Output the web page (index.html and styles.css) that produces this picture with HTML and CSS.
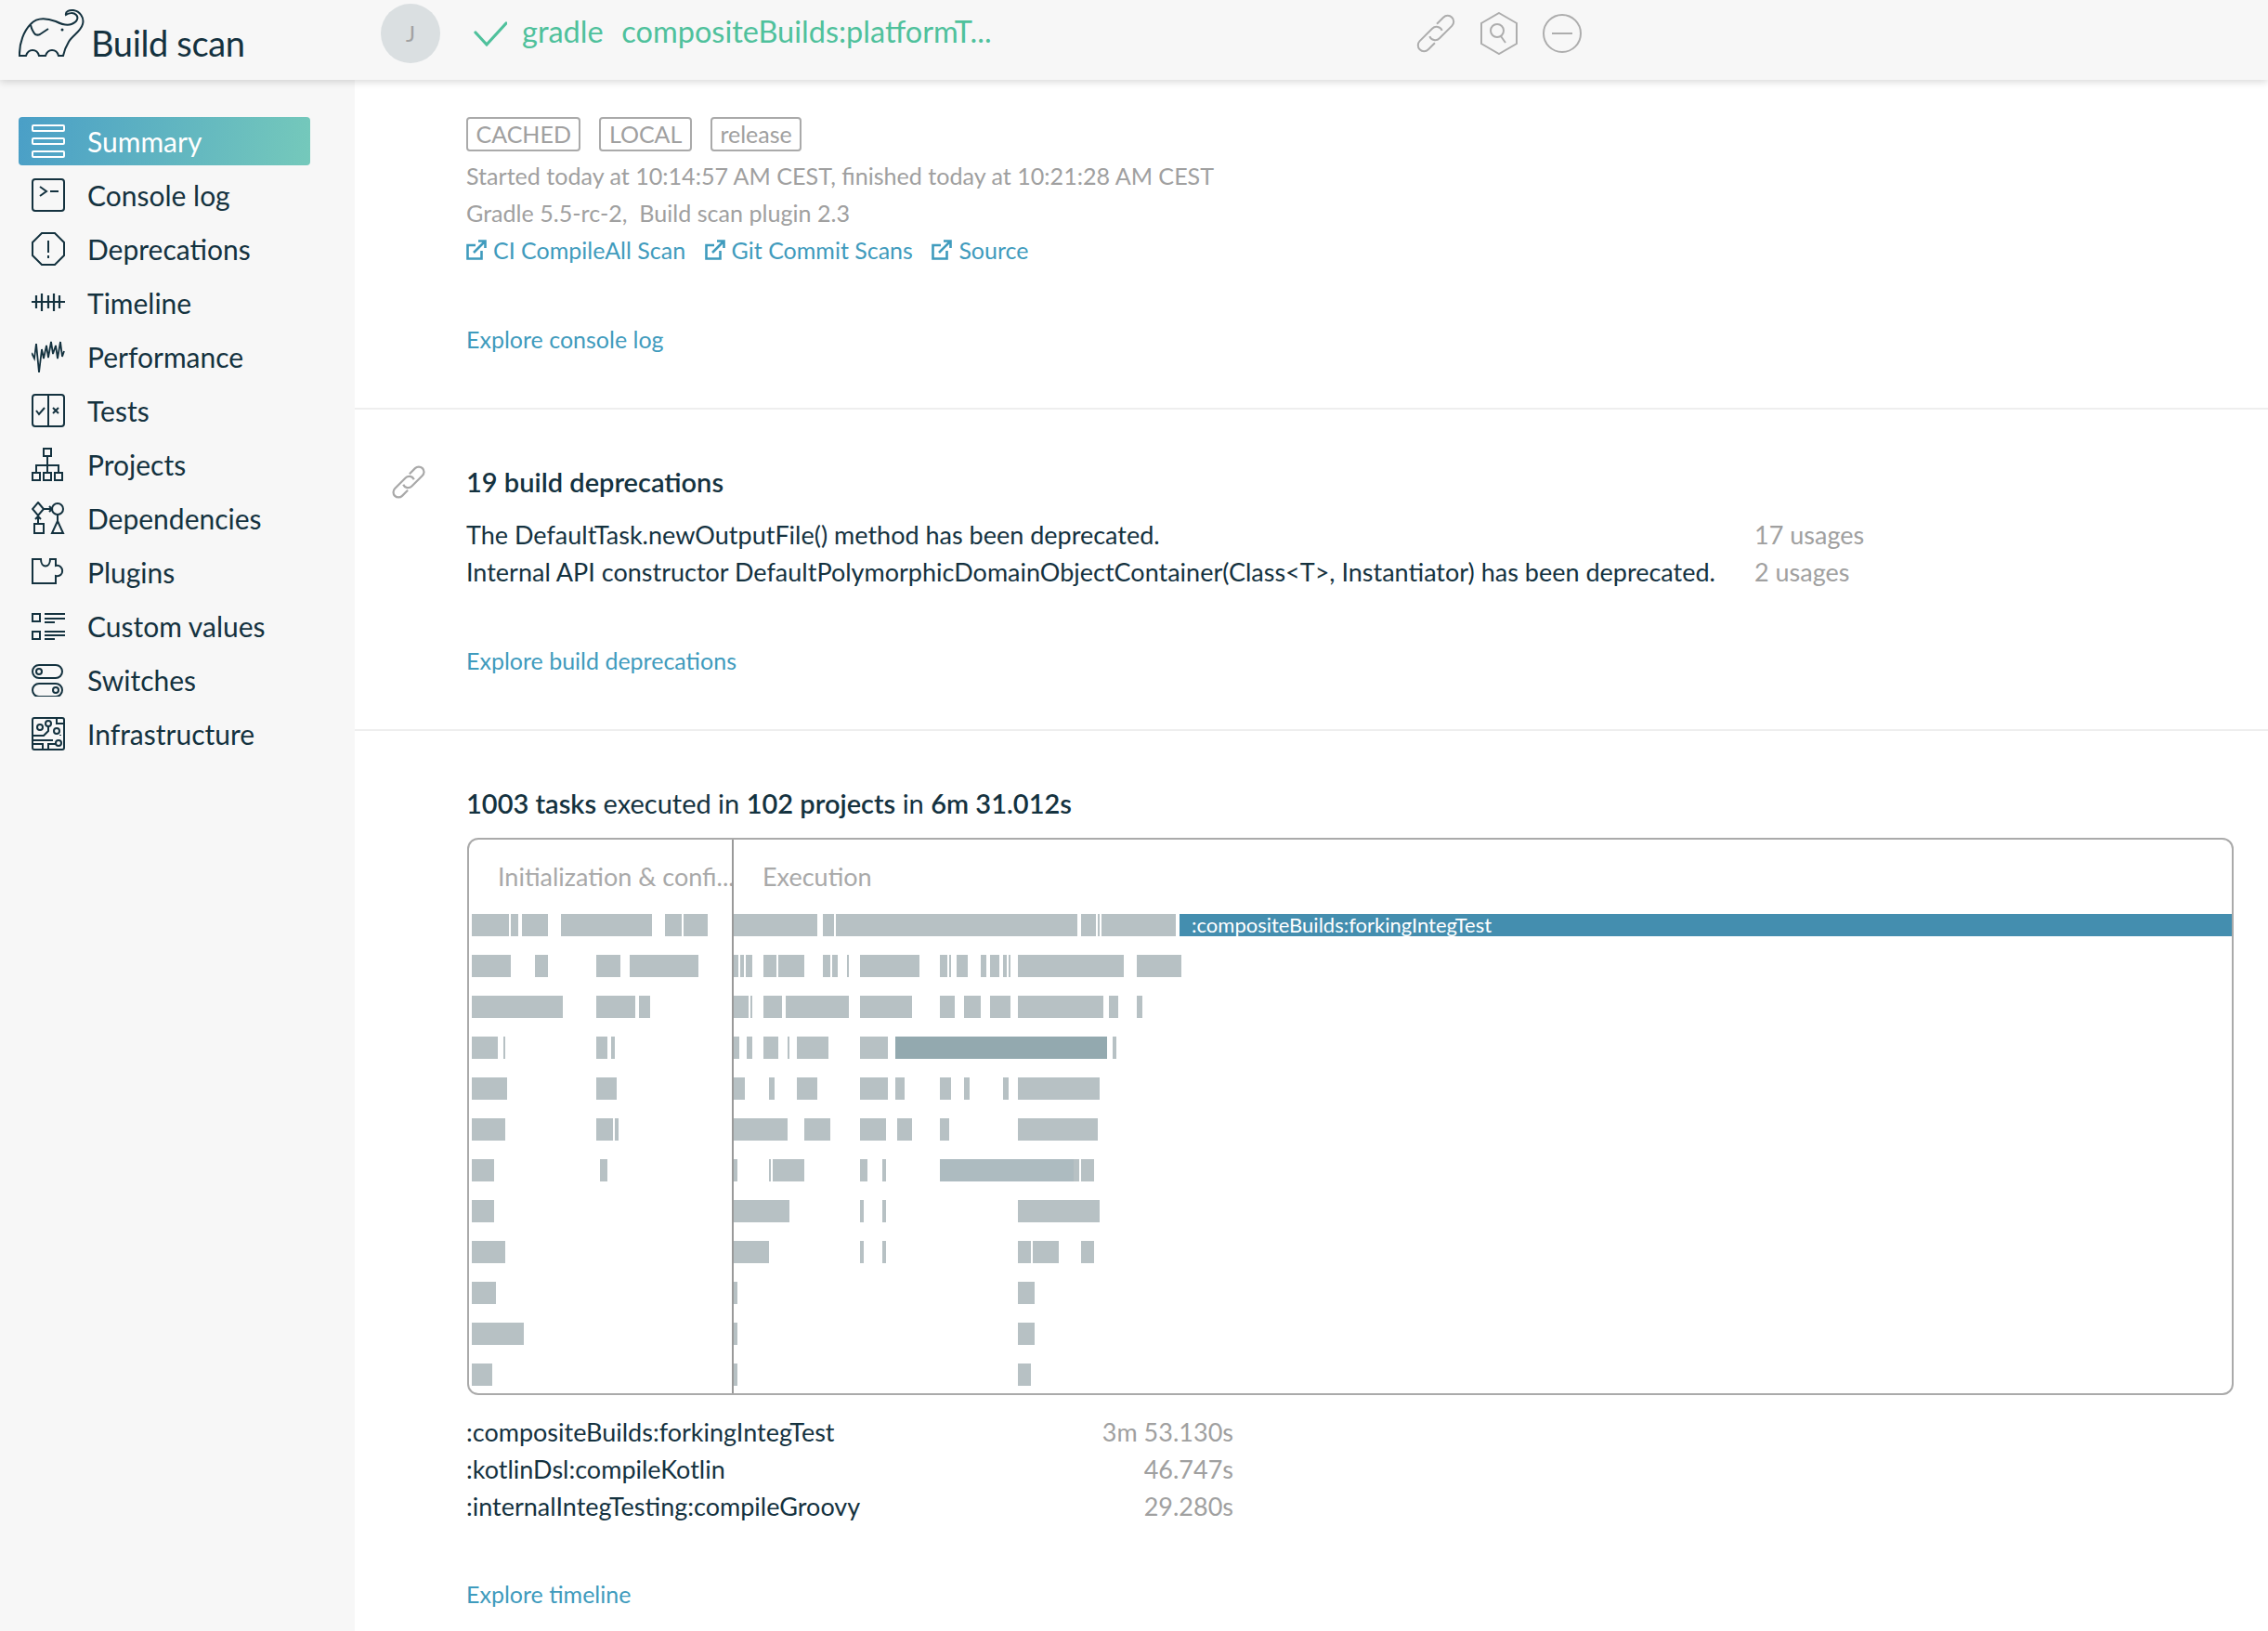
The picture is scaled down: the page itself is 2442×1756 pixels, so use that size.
FILE: index.html
```html
<!DOCTYPE html>
<html lang="en">
<head>
<meta charset="utf-8">
<title>Build scan</title>
<link rel="stylesheet" href="styles.css">
</head>
<body>
<header class="topbar">
  <div class="brand">
    <svg class="logo" viewBox="20 8 72 56"><path d="M21 60C20.500 46 26 33 33 26 40 18 52 20 60 23 66 26 72 28 77 26 83 24 85 19 82 16 79 13 74 14 71 16 70 12 75 10.500 79 11 86 12 91 19 89 26 87 34 78 38 74 45 71 50 69 55 68 60H63C62 56 60 54 56 54 52 54 50 57 49 60H42C41 56 39 54 35 54 31 54 29 57 28 60Z"/><path d="M33 27c1 4 3 8 5 10 2 1 3 1 5 0l9-6"/><circle class="fill" cx="67" cy="32" r="1.500"/></svg>
    <span class="brand-name">Build scan</span>
  </div>
  <div class="avatar">J</div>
  <svg class="check" viewBox="0 0 36 36"><path d="M2 15l12 13L35 5"/></svg>
  <div class="title">gradle&nbsp;&nbsp;compositeBuilds:platformT...</div>
  <div class="actions">
    <svg class="action" viewBox="0 0 42 42"><g transform="rotate(-45 21 21)"><path d="M13 27.500H3a6.500 6.500 0 0 1 0-13H22a6.500 6.500 0 0 1 6 9"/><path d="M29 14.500H39a6.500 6.500 0 0 1 0 13H20a6.500 6.500 0 0 1-6-9"/></g></svg>
    <svg class="action action-hex" viewBox="0 0 40 46"><path d="M20 1l19 11v22L20 45 1 34V12z"/><circle cx="18" cy="20" r="7"/><path d="M22 26l5 7"/></svg>
    <svg class="action" viewBox="0 0 42 42"><circle cx="21" cy="21" r="20"/><path d="M10 21h22"/></svg>
  </div>
</header>
<div class="layout">
  <nav class="sidebar">
    <a class="nav-item active"><svg class="nav-icon" viewBox="0 0 36 36"><rect x="1" y="1" width="34" height="6" rx="1"/><rect x="1" y="15" width="34" height="6" rx="1"/><rect x="1" y="29" width="34" height="6" rx="1"/></svg>Summary</a>
    <a class="nav-item"><svg class="nav-icon" viewBox="0 0 36 36"><rect x="1" y="1" width="34" height="34" rx="3"/><path d="M9 9l7 5-7 5M20 14h9"/></svg>Console log</a>
    <a class="nav-item"><svg class="nav-icon" viewBox="0 0 36 36"><path d="M11 1h14l10 10v14L25 35H11L1 25V11z"/><path d="M18 9v13M18 25v3"/></svg>Deprecations</a>
    <a class="nav-item"><svg class="nav-icon" viewBox="0 0 36 36"><path d="M0 17h36M5 10v14M11 8v19M18 10v14M24 8v19M30 10v14" class="thick"/></svg>Timeline</a>
    <a class="nav-item"><svg class="nav-icon" viewBox="0 0 36 36"><path d="M0 14l3 6 2-16 3 31 3-25 2 10 3-14 2 13 3-17 2 13 3-9 2 14 3-18 2 16 2-6" class="wave"/></svg>Performance</a>
    <a class="nav-item"><svg class="nav-icon" viewBox="0 0 36 36"><rect x="1" y="1" width="34" height="34" rx="3"/><path d="M18 1v34M5 18l3 4 6-7M23 15l6 6M29 15l-6 6"/></svg>Tests</a>
    <a class="nav-item"><svg class="nav-icon" viewBox="0 0 36 36"><rect x="13" y="1" width="8" height="8"/><rect x="1" y="27" width="8" height="8"/><rect x="13" y="27" width="8" height="8"/><rect x="25" y="27" width="8" height="8"/><path d="M17 9v18M5 27v-8h24v8"/></svg>Projects</a>
    <a class="nav-item"><svg class="nav-icon" viewBox="0 0 36 36"><path d="M7 1l6 7-6 7-6-7z"/><circle cx="28" cy="8" r="6"/><rect x="3" y="24" width="10" height="10"/><path d="M28 14v7M28 21l6 13H22zM13 8h9M19 5l3 3-3 3M7 24v-8M4 19l3-3 3 3"/></svg>Dependencies</a>
    <a class="nav-item"><svg class="nav-icon" viewBox="0 0 36 36"><path d="M1 4h9c0 10 10 10 10 0h6v7c9-2 10 13 0 11v8H1z"/></svg>Plugins</a>
    <a class="nav-item"><svg class="nav-icon" viewBox="0 0 36 36"><rect x="1" y="5" width="8" height="8"/><rect x="1" y="24" width="8" height="8"/><path d="M14 5h22M14 10h22M14 14h11M14 24h22M14 28h22M14 32h11"/></svg>Custom values</a>
    <a class="nav-item"><svg class="nav-icon" viewBox="0 0 36 36"><rect x="1" y="2" width="32" height="14" rx="7"/><rect x="1" y="22" width="32" height="14" rx="7"/><circle cx="8" cy="9" r="3"/><circle cx="26" cy="29" r="3"/></svg>Switches</a>
    <a class="nav-item"><svg class="nav-icon" viewBox="0 0 36 36"><rect x="1" y="1" width="34" height="34" rx="2"/><circle cx="9" cy="11" r="3"/><circle cx="18" cy="7" r="3"/><circle cx="27" cy="15" r="3"/><circle cx="29" cy="28" r="3"/><path d="M1 20h12l5-5V10M27 1v6h8M1 25h22v0M1 29h11v6M18 35v-6h8M31 20v-1"/></svg>Infrastructure</a>
  </nav>
  <main class="content">
    <section class="section section-first">
      <div class="gutter"></div>
      <div class="body">
        <div class="tags"><span class="tag">CACHED</span><span class="tag">LOCAL</span><span class="tag">release</span></div>
        <p class="muted">Started today at 10:14:57 AM CEST, finished today at 10:21:28 AM CEST</p>
        <p class="muted">Gradle 5.5-rc-2,&nbsp; Build scan plugin 2.3</p>
        <div class="links">
          <a class="link ext"><svg class="ext-icon" viewBox="0 0 22 22"><path d="M10 6H1.500v14.500h15V12M8 14L20 2M13 1.500h7.500V9"/></svg>CI CompileAll Scan</a>
          <a class="link ext"><svg class="ext-icon" viewBox="0 0 22 22"><path d="M10 6H1.500v14.500h15V12M8 14L20 2M13 1.500h7.500V9"/></svg>Git Commit Scans</a>
          <a class="link ext"><svg class="ext-icon" viewBox="0 0 22 22"><path d="M10 6H1.500v14.500h15V12M8 14L20 2M13 1.500h7.500V9"/></svg>Source</a>
        </div>
        <a class="link explore">Explore console log</a>
      </div>
    </section>
    <section class="section">
      <div class="gutter"><svg class="anchor" viewBox="0 0 42 42"><g transform="rotate(-45 21 21)"><path d="M13 27.500H3a6.500 6.500 0 0 1 0-13H22a6.500 6.500 0 0 1 6 9"/><path d="M29 14.500H39a6.500 6.500 0 0 1 0 13H20a6.500 6.500 0 0 1-6-9"/></g></svg></div>
      <div class="body">
        <h2 class="heading">19 build deprecations</h2>
        <div class="usage-list">
          <span>The DefaultTask.newOutputFile() method has been deprecated.</span><span class="usage">17 usages</span>
          <span>Internal API constructor DefaultPolymorphicDomainObjectContainer(Class&lt;T&gt;, Instantiator) has been deprecated.</span><span class="usage">2 usages</span>
        </div>
        <a class="link explore">Explore build deprecations</a>
      </div>
    </section>
    <section class="section section-last">
      <div class="gutter"></div>
      <div class="body">
        <h2 class="heading regular"><b>1003 tasks</b> executed in <b>102 projects</b> in <b>6m 31.012s</b></h2>
        <div class="chart">
          <div class="chart-head"><div class="phase phase-init">Initialization &amp; confi...</div><div class="phase phase-exec">Execution</div></div>
          <div class="rows">
            <div class="row"><span style="left:3px;width:40px"></span><span style="left:45px;width:8px"></span><span style="left:57px;width:28px"></span><span style="left:99px;width:98px"></span><span style="left:211px;width:18px"></span><span style="left:231px;width:26px"></span><span style="left:285px;width:90px"></span><span style="left:381px;width:12px"></span><span style="left:395px;width:260px"></span><span style="left:659px;width:16px"></span><span style="left:677px;width:2px"></span><span style="left:681px;width:80px"></span><span class="selected">:compositeBuilds:forkingIntegTest</span></div>
            <div class="row"><span style="left:3px;width:42px"></span><span style="left:71px;width:14px"></span><span style="left:137px;width:26px"></span><span style="left:173px;width:74px"></span><span style="left:285px;width:5px"></span><span style="left:292px;width:4px"></span><span style="left:298px;width:7px"></span><span style="left:317px;width:14px"></span><span style="left:333px;width:28px"></span><span style="left:381px;width:8px"></span><span style="left:391px;width:6px"></span><span style="left:407px;width:2px"></span><span style="left:421px;width:64px"></span><span style="left:507px;width:8px"></span><span style="left:517px;width:2px"></span><span style="left:525px;width:12px"></span><span style="left:551px;width:6px"></span><span style="left:561px;width:10px"></span><span style="left:575px;width:4px"></span><span style="left:581px;width:2px"></span><span style="left:591px;width:114px"></span><span style="left:719px;width:48px"></span></div>
            <div class="row"><span style="left:3px;width:98px"></span><span style="left:137px;width:42px"></span><span style="left:183px;width:12px"></span><span style="left:285px;width:16px"></span><span style="left:303px;width:2px"></span><span style="left:317px;width:20px"></span><span style="left:341px;width:68px"></span><span style="left:421px;width:56px"></span><span style="left:507px;width:16px"></span><span style="left:533px;width:18px"></span><span style="left:561px;width:22px"></span><span style="left:591px;width:92px"></span><span style="left:689px;width:10px"></span><span style="left:719px;width:6px"></span></div>
            <div class="row"><span style="left:3px;width:28px"></span><span style="left:37px;width:2px"></span><span style="left:137px;width:12px"></span><span style="left:153px;width:4px"></span><span style="left:285px;width:6px"></span><span style="left:299px;width:6px"></span><span style="left:317px;width:16px"></span><span style="left:343px;width:2px"></span><span style="left:353px;width:34px"></span><span style="left:421px;width:30px"></span><span class="dark" style="left:459px;width:228px"></span><span style="left:693px;width:4px"></span></div>
            <div class="row"><span style="left:3px;width:38px"></span><span style="left:137px;width:22px"></span><span style="left:285px;width:12px"></span><span style="left:323px;width:6px"></span><span style="left:353px;width:22px"></span><span style="left:421px;width:30px"></span><span style="left:459px;width:10px"></span><span style="left:507px;width:12px"></span><span style="left:533px;width:6px"></span><span style="left:575px;width:6px"></span><span style="left:591px;width:88px"></span></div>
            <div class="row"><span style="left:3px;width:36px"></span><span style="left:137px;width:18px"></span><span style="left:157px;width:4px"></span><span style="left:285px;width:58px"></span><span style="left:361px;width:28px"></span><span style="left:421px;width:28px"></span><span style="left:461px;width:16px"></span><span style="left:507px;width:10px"></span><span style="left:591px;width:86px"></span></div>
            <div class="row"><span style="left:3px;width:24px"></span><span style="left:141px;width:8px"></span><span style="left:285px;width:4px"></span><span style="left:323px;width:2px"></span><span style="left:327px;width:34px"></span><span style="left:421px;width:8px"></span><span style="left:445px;width:4px"></span><span class="tint" style="left:507px;width:144px"></span><span style="left:651px;width:6px"></span><span style="left:659px;width:14px"></span></div>
            <div class="row"><span style="left:3px;width:24px"></span><span style="left:285px;width:60px"></span><span style="left:421px;width:4px"></span><span style="left:445px;width:4px"></span><span style="left:591px;width:88px"></span></div>
            <div class="row"><span style="left:3px;width:36px"></span><span style="left:285px;width:38px"></span><span style="left:421px;width:4px"></span><span style="left:445px;width:4px"></span><span style="left:591px;width:14px"></span><span style="left:607px;width:28px"></span><span style="left:659px;width:14px"></span></div>
            <div class="row"><span style="left:3px;width:26px"></span><span style="left:285px;width:4px"></span><span style="left:591px;width:18px"></span></div>
            <div class="row"><span style="left:3px;width:56px"></span><span style="left:285px;width:4px"></span><span style="left:591px;width:18px"></span></div>
            <div class="row"><span style="left:3px;width:22px"></span><span style="left:285px;width:4px"></span><span style="left:591px;width:14px"></span></div>
          </div>
        </div>
        <div class="durations">
          <span>:compositeBuilds:forkingIntegTest</span><span class="usage right">3m 53.130s</span>
          <span>:kotlinDsl:compileKotlin</span><span class="usage right">46.747s</span>
          <span>:internalIntegTesting:compileGroovy</span><span class="usage right">29.280s</span>
        </div>
        <a class="link explore explore-last">Explore timeline</a>
      </div>
    </section>
  </main>
</div>
</body>
</html>
```
FILE: styles.css
```css
* { box-sizing: border-box; }
html, body { margin: 0; height: 100%; }
body {
  height: 1756px;
  overflow: hidden;
  display: flex;
  flex-direction: column;
  background: #fff;
  color: #14323f;
  font-family: Lato, "Open Sans", sans-serif;
  font-size: 27px;
  line-height: 40px;
}
svg { fill: none; stroke: currentColor; stroke-width: 2; flex: none; }

.topbar {
  position: relative;
  z-index: 2;
  flex: none;
  height: 86px;
  display: flex;
  align-items: flex-start;
  background: #f7f7f7;
  box-shadow: 0 2px 8px rgba(0, 0, 0, .16);
}
.brand { width: 410px; padding: 8px 0 0 20px; display: flex; }
.logo { width: 72px; height: 56px; color: #14323f; stroke-width: 2; }
.logo .fill { fill: currentColor; stroke: none; }
.brand-name { margin: 14px 0 0 6px; font-size: 38px; line-height: 48px; letter-spacing: -.35px; }
.avatar {
  width: 64px; height: 64px; margin-top: 4px;
  border-radius: 50%;
  background: #dadfe1; color: #a2a2a2;
  font-size: 24px; line-height: 64px; text-align: center;
}
.check { width: 36px; height: 36px; margin: 20px 0 0 36px; color: #4fc19c; stroke-width: 3.2; stroke-linecap: round; }
.title { width: 963px; margin: 11px 0 0 16px; font-size: 32.5px; line-height: 46px; word-spacing: 1.5px; color: #4fc19c; }
.actions { display: flex; align-items: center; gap: 27px; height: 72px; color: #adadad; }
.action { width: 42px; height: 42px; }
.action-hex { height: 46px; width: 40px; }

.layout { flex: 1; display: flex; min-height: 0; }
.sidebar {
  flex: none;
  width: 382px;
  padding: 40px 0 0 20px;
  background: #f7f7f7;
  display: flex;
  flex-direction: column;
  gap: 6px;
}
.nav-item {
  width: 314px; height: 52px;
  padding-left: 14px;
  display: flex; align-items: center; gap: 24px;
  border-radius: 4px;
  font-size: 30px;
}
.nav-item.active {
  background: linear-gradient(100deg, #4a9fc7, #75c9bb);
  color: #fff;
}
.nav-icon { width: 36px; height: 36px; }
.nav-icon .thick { stroke-width: 2.2; }
.nav-icon .wave { stroke-width: 1.8; }

.content { flex: 1; min-width: 0; }
.section {
  display: flex;
  padding: 58px 37px 54px 40px;
  border-bottom: 2px solid #eee;
}
.section-first { padding-top: 40px; }
.section-last { padding-bottom: 0; border-bottom: 0; }
.gutter { width: 80px; flex: none; }
.body { flex: 1; min-width: 0; }
.anchor { width: 36px; height: 36px; margin-top: 2px; color: #a9a9a9; stroke-width: 2.6; }

.tags { display: flex; gap: 20px; margin-bottom: 6px; }
.tag {
  height: 37px; padding: 0 8.5px;
  border: 2px solid #aaa; border-radius: 4px;
  color: #a0a0a0; font-size: 25px; line-height: 33px;
}
.muted { margin: 0; color: #a0a0a0; font-size: 25.1px; }
.links { display: flex; gap: 20.5px; }
.link { color: #3f9bbd; font-size: 25px; }
.ext { display: flex; align-items: center; }
.ext-icon { width: 22px; height: 22px; margin-right: 7px; stroke-width: 2.6; }
.explore { display: block; margin-top: 56px; }
.explore-last { margin-top: 54px; }
.heading { margin: 0; font-size: 29px; font-weight: 600; line-height: 40px; }
.heading.regular { font-weight: 400; }
.heading b { font-weight: 600; }
.usage-list {
  display: grid;
  grid-template-columns: 1387px 1fr;
  margin-top: 17px;
}
.usage-list + .explore { margin-top: 55px; }
.usage { color: #a0a0a0; }
.durations {
  display: grid;
  grid-template-columns: auto 1fr;
  width: 826px;
  margin-top: 20px;
}
.right { text-align: right; }

.chart {
  position: relative;
  margin: 17px 0 0 1px;
  height: 600px;
  border: 2px solid #aaa;
  border-radius: 12px;
}
.chart::after {
  content: "";
  position: absolute;
  top: 0; bottom: 0; left: 283px;
  width: 2px;
  background: #999;
}
.chart-head { display: flex; height: 80px; }
.phase { padding-top: 20px; color: #a9a9a9; white-space: nowrap; overflow: hidden; }
.phase-init { width: 284px; padding-left: 31px; }
.phase-exec { padding-left: 32px; }
.rows { display: flex; flex-direction: column; gap: 20px; }
.row { position: relative; height: 24px; }
.row span { position: absolute; top: 0; height: 24px; background: #b7c1c4; }
.row .dark { background: #93a9af; }
.row .tint { background: #adbbc0; }
.row .selected {
  left: 765px; right: 0;
  padding-left: 13px;
  background: #448eaf;
  color: #fff;
  font-size: 22px; line-height: 24px;
}
```
